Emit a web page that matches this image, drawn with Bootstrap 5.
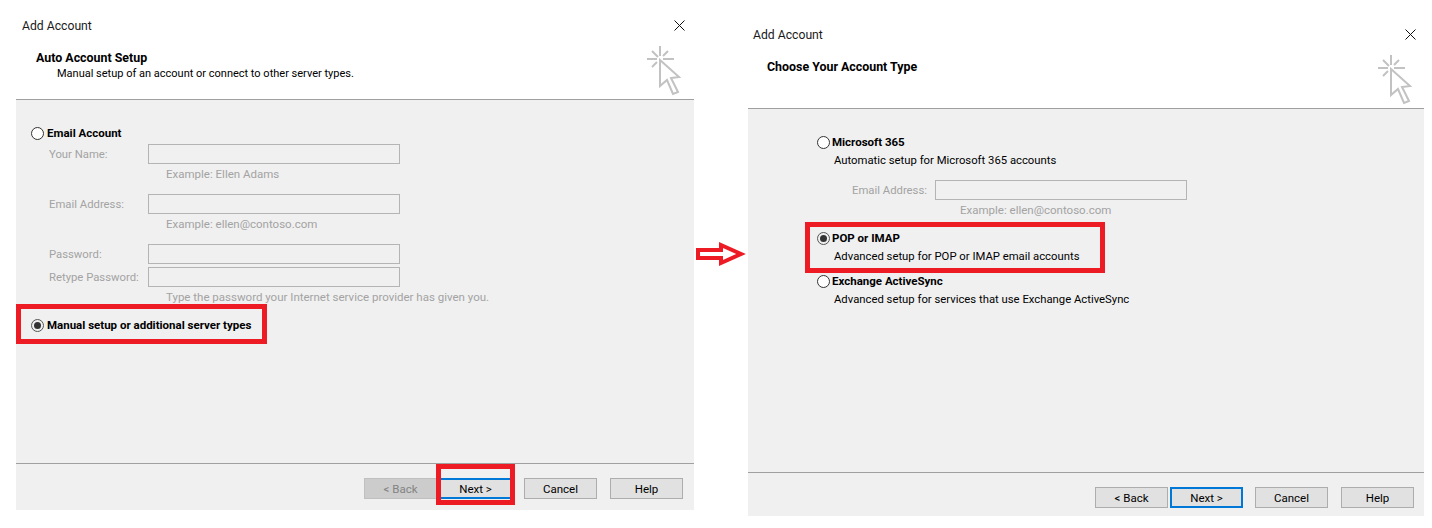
<!DOCTYPE html>
<html lang="en">
<head>
    <meta charset="UTF-8">
    <title>Add Account</title>
    <link href="https://cdn.jsdelivr.net/npm/bootstrap@5.3.0/dist/css/bootstrap.min.css" rel="stylesheet">
    <style>
        body { background: #fff; font-family: Roboto, "Open Sans", sans-serif; font-size: 11.3px; line-height: 14px; color: #000; overflow: hidden; }
        .dlg { position: absolute; top: 0; left: 16px; width: 678px; height: 510px; }
        .dlg-right { top: 9px; left: 747px; height: 507px; }
        .dlg-right .dlg-head, .dlg-right .dlg-body, .dlg-right .dlg-foot { margin: 0 1px; }
        .dlg-head { height: 100px; flex: none; position: relative; border-bottom: 1px solid #a0a0a0; }
        .dlg-title { padding: 19px 0 0 6px; font-size: 12.2px; color: #1a1a1a; }
        .dlg-heading { padding: 18px 0 0 20px; font-weight: 700; font-size: 12.4px; }
        .dlg-sub { padding: 2px 0 0 41px; font-size: 11px; }
        .dlg-close { position: absolute; left: 658px; top: 20px; }
        .dlg-cursor { position: absolute; left: 630px; top: 45px; }
        .dlg-right .dlg-title { padding-left: 5px; }
        .dlg-right .dlg-heading { padding-left: 19px; }
        .dlg-right .dlg-close { left: 657px; }
        .dlg-right .dlg-cursor { left: 629px; }
        .dlg-body { height: 363px; flex: none; background: #f0f0f0; padding: 26px 0 0 15px; }
        .dlg-right .dlg-body { padding-left: 69px; }
        .dlg-foot { flex: 1 1 auto; background: #f0f0f0; border-top: 1px solid #a0a0a0; padding: 14px 11px 0 0; }
        .dlg-right .dlg-foot { padding-right: 10px; }
        .opt { height: 14px; font-weight: 700; font-size: 11.5px; }
        .opt-dot { width: 13px; height: 13px; flex: none; border: 1px solid #333; border-radius: 50%; background: #fff; margin-right: 3px; display: flex; align-items: center; justify-content: center; }
        .opt-on { background: #f0f0f0; border-color: #555; }
        .opt-on::after { content: ""; width: 7px; height: 7px; border-radius: 50%; background: #333; }
        .dlg-right .opt-dot { margin-right: 2px; }
        .opt-desc { height: 14px; padding: 1px 0 0 17px; }
        .fld { height: 20px; color: #a3a3a3; margin-left: 18px; }
        .fld-label { width: 99px; flex: none; padding-top: 2px; }
        .fld-box { width: 252px; height: 20px; border: 1px solid #b4b4b4; background: #f0f0f0; }
        .fld-hint { height: 14px; color: #a3a3a3; padding-left: 135px; margin-top: 3px; font-size: 11.5px; }
        .dlg-right .fld { margin-left: 35px; }
        .dlg-right .fld-label { width: 83px; }
        .dlg-right .fld-hint { padding-left: 143px; }
        .gap-3px { margin-top: 3px; }
        .gap-4px { margin-top: 4px; }
        .gap-11px { margin-top: 11px; }
        .gap-13px { margin-top: 13px; }
        .gap-14px { margin-top: 14px; }
        .win-btn { width: 73px; height: 21px; flex: none; border: 1px solid #adadad; border-radius: 0; background: #e1e1e1; font-size: 11.5px; line-height: 17px; color: #000; padding: 1px 0 0; }
        .win-btn:disabled { background: #cccccc; border-color: #bfbfbf; color: #838383; opacity: 1; }
        .win-btn-default { border: 2px solid #0078d7; line-height: 15px; margin: 0 12px 0 2px; }
        .win-btn-cancel { margin-right: 13px; }
        .hl { position: absolute; border: 5px solid #ed1c24; pointer-events: none; }
        .hl-manual { left: 16px; top: 304px; width: 251px; height: 40px; }
        .hl-next { left: 436px; top: 464px; width: 79px; height: 41px; }
        .hl-pop { left: 805px; top: 222px; width: 300px; height: 51px; }
        .flow-arrow { position: absolute; left: 695px; top: 240px; }
    </style>
</head>
<body>

<div class="dlg d-flex flex-column">
    <div class="dlg-head">
        <div class="dlg-title">Add Account</div>
        <div class="dlg-heading">Auto Account Setup</div>
        <div class="dlg-sub">Manual setup of an account or connect to other server types.</div>
        <svg class="dlg-close" width="11" height="11" viewBox="0 0 11 11"><path d="M.5.5l10 10M10.5.5l-10 10" stroke="#111" fill="none"/></svg>
        <svg class="dlg-cursor" width="36" height="52" viewBox="0 0 36 52"><path d="M14 1v10M1 14h10M17 14h11M6 6l6 6M22 6l-5 5M6 22l5-5" stroke="#c2c2c2" stroke-width="2" fill="none"/><path d="M14 15l19 17-8 1 7 14-5 2-6-14-7 6z" stroke="#c2c2c2" stroke-width="2" fill="#fff"/></svg>
    </div>
    <div class="dlg-body">
        <div class="opt d-flex align-items-center"><span class="opt-dot"></span>Email Account</div>
        <div class="fld d-flex align-items-center gap-4px"><span class="fld-label">Your Name:</span><span class="fld-box"></span></div>
        <div class="fld-hint">Example: Ellen Adams</div>
        <div class="fld d-flex align-items-center gap-13px"><span class="fld-label">Email Address:</span><span class="fld-box"></span></div>
        <div class="fld-hint">Example: ellen@contoso.com</div>
        <div class="fld d-flex align-items-center gap-13px"><span class="fld-label">Password:</span><span class="fld-box"></span></div>
        <div class="fld d-flex align-items-center gap-3px"><span class="fld-label">Retype Password:</span><span class="fld-box"></span></div>
        <div class="fld-hint">Type the password your Internet service provider has given you.</div>
        <div class="opt d-flex align-items-center gap-14px"><span class="opt-dot opt-on"></span>Manual setup or additional server types</div>
    </div>
    <div class="dlg-foot d-flex justify-content-end align-items-start">
        <button class="win-btn" disabled>&lt; Back</button>
        <button class="win-btn win-btn-default">Next &gt;</button>
        <button class="win-btn win-btn-cancel">Cancel</button>
        <button class="win-btn">Help</button>
    </div>
</div>

<div class="dlg dlg-right d-flex flex-column">
    <div class="dlg-head">
        <div class="dlg-title">Add Account</div>
        <div class="dlg-heading">Choose Your Account Type</div>
        <svg class="dlg-close" width="11" height="11" viewBox="0 0 11 11"><path d="M.5.5l10 10M10.5.5l-10 10" stroke="#111" fill="none"/></svg>
        <svg class="dlg-cursor" width="36" height="52" viewBox="0 0 36 52"><path d="M14 1v10M1 14h10M17 14h11M6 6l6 6M22 6l-5 5M6 22l5-5" stroke="#c2c2c2" stroke-width="2" fill="none"/><path d="M14 15l19 17-8 1 7 14-5 2-6-14-7 6z" stroke="#c2c2c2" stroke-width="2" fill="#fff"/></svg>
    </div>
    <div class="dlg-body">
        <div class="opt d-flex align-items-center"><span class="opt-dot"></span>Microsoft 365</div>
        <div class="opt-desc gap-4px">Automatic setup for Microsoft 365 accounts</div>
        <div class="fld d-flex align-items-center gap-13px"><span class="fld-label">Email Address:</span><span class="fld-box"></span></div>
        <div class="fld-hint">Example: ellen@contoso.com</div>
        <div class="opt d-flex align-items-center gap-14px"><span class="opt-dot opt-on"></span>POP or IMAP</div>
        <div class="opt-desc gap-4px">Advanced setup for POP or IMAP email accounts</div>
        <div class="opt d-flex align-items-center gap-11px"><span class="opt-dot"></span>Exchange ActiveSync</div>
        <div class="opt-desc gap-4px">Advanced setup for services that use Exchange ActiveSync</div>
    </div>
    <div class="dlg-foot d-flex justify-content-end align-items-start">
        <button class="win-btn">&lt; Back</button>
        <button class="win-btn win-btn-default">Next &gt;</button>
        <button class="win-btn win-btn-cancel">Cancel</button>
        <button class="win-btn">Help</button>
    </div>
</div>

<div class="hl hl-manual"></div>
<div class="hl hl-next"></div>
<div class="hl hl-pop"></div>
<svg class="flow-arrow" width="52" height="28" viewBox="0 0 52 28"><path d="M3 10h23V5l20 9-20 9v-5H3z" fill="#fff" stroke="#ed1c24" stroke-width="4"/></svg>

</body>
</html>
